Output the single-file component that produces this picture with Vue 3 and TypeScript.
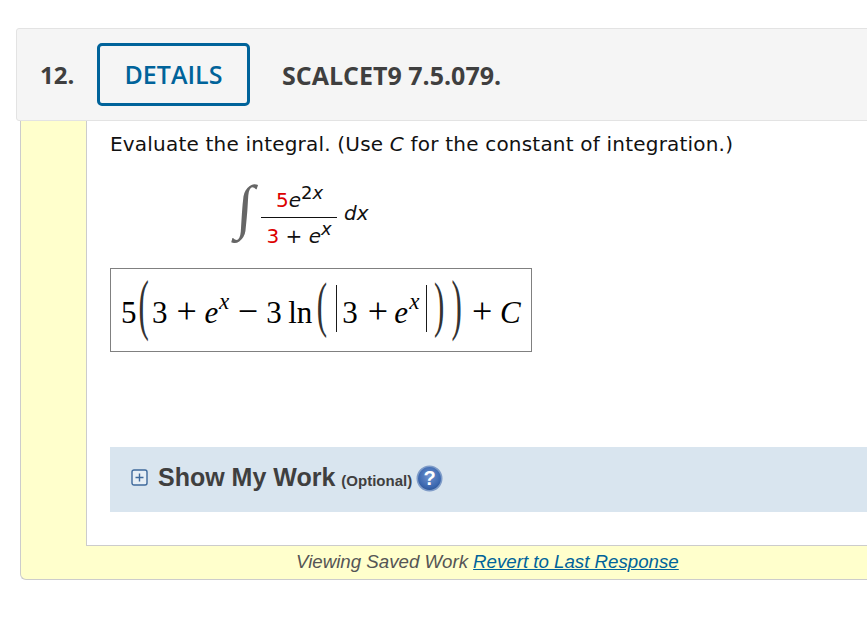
<template>
  <div class="page">
    <div class="question">
      <div class="head">
        <span class="num">12.</span>
        <button class="details">DETAILS</button>
        <span class="code">SCALCET9 7.5.079.</span>
      </div>
      <div class="shell">
        <div class="panel">
          <p class="prompt">Evaluate the integral. (Use <i>C</i> for the constant of integration.)</p>
          <div class="integral">
            <span class="int-sign">∫</span>
            <div class="frac">
              <div class="top"><span class="red">5</span><i>e</i><sup><span>2</span><i>x</i></sup></div>
              <div class="bottom"><span class="red">3</span> + <i>e</i><sup><i>x</i></sup></div>
            </div>
            <span class="dx"><i>dx</i></span>
          </div>
          <div class="answer">
            <span
              v-for="(t, i) in answer"
              :key="i"
              :class="t.kind"
              :style="{ marginLeft: t.gap + 'px' }"
            >{{ t.text }}</span>
          </div>
          <div class="work">
            <svg class="toggle" width="17" height="17" viewBox="0 0 17 17">
              <rect x="1" y="1" width="15" height="15" rx="2" fill="#e6eef5" stroke="#3f6a9c" stroke-width="1.4" />
              <path d="M4.5 8.5h8M8.5 4.5v8" stroke="#3f6a9c" stroke-width="1.4" fill="none" />
            </svg>
            <span class="work-title">Show My Work</span>
            <span class="optional">(Optional)</span>
            <svg class="help" width="27" height="27" viewBox="0 0 27 27">
              <defs>
                <radialGradient id="helpFill" cx="50%" cy="40%" r="60%">
                  <stop offset="0" stop-color="#6f93cf" />
                  <stop offset="0.75" stop-color="#3c68b0" />
                  <stop offset="1" stop-color="#2c5596" />
                </radialGradient>
              </defs>
              <circle cx="13.5" cy="13.5" r="12.2" fill="url(#helpFill)" stroke="#7f9cc8" stroke-width="1.6" />
              <text x="13.5" y="20" text-anchor="middle" class="help-mark">?</text>
            </svg>
          </div>
        </div>
        <div class="foot">
          <i>Viewing Saved Work</i> <a href="#" class="revert">Revert to Last Response</a>
        </div>
      </div>
    </div>
  </div>
</template>

<script setup lang="ts">
interface Token {
  text: string;
  kind: string;
  gap: number;
}

// the typeset answer, gap is the kerning in front of each token
const answer: Token[] = [
  { text: '5', kind: 'num-tok', gap: 0 },
  { text: '(', kind: 'paren big', gap: 2 },
  { text: '3', kind: 'num-tok', gap: 3.2 },
  { text: '+', kind: 'op', gap: 9 },
  { text: 'e', kind: 'var', gap: 7.7 },
  { text: 'x', kind: 'var exp', gap: 0.7 },
  { text: '−', kind: 'op', gap: 8.5 },
  { text: '3', kind: 'num-tok', gap: 8.2 },
  { text: 'ln', kind: 'num-tok', gap: 6.5 },
  { text: '(', kind: 'paren mid', gap: 4.5 },
  { text: '', kind: 'bar', gap: 9.2 },
  { text: '3', kind: 'num-tok', gap: 5 },
  { text: '+', kind: 'op', gap: 10 },
  { text: 'e', kind: 'var', gap: 6.2 },
  { text: 'x', kind: 'var exp', gap: 1.2 },
  { text: '', kind: 'bar', gap: 6 },
  { text: ')', kind: 'paren mid', gap: 7.5 },
  { text: ')', kind: 'paren big', gap: 7.2 },
  { text: '+', kind: 'op', gap: 10.2 },
  { text: 'C', kind: 'var', gap: 7.7 }
];
</script>

<style>
html, body {
  margin: 0;
  background: #fff;
  overflow: hidden;
}
</style>

<style scoped>
.page {
  width: 867px;
  height: 617px;
  padding-top: 28px;
  box-sizing: border-box;
  overflow: hidden;
}

.question {
  width: 900px;
  margin-left: 16px;
}

.head {
  height: 93px;
  box-sizing: border-box;
  display: flex;
  align-items: center;
  background: #f5f5f5;
  border: 1px solid #e3e3e3;
  border-radius: 3px;
  font-family: "Open Sans", sans-serif;
  color: #3f3f3f;
  padding-left: 23px;
}

.num {
  font-size: 24px;
  font-weight: 700;
  width: 57px;
}

.details {
  width: 153px;
  height: 63px;
  box-sizing: border-box;
  border: 3px solid #00639a;
  border-radius: 5px;
  background: transparent;
  color: #00639a;
  font-family: "Open Sans", sans-serif;
  font-size: 25px;
  font-weight: 600;
  padding: 0 0 2px;
}

.code {
  margin-left: 32px;
  font-size: 25px;
  font-weight: 700;
}

.shell {
  margin-left: 4px;
  background: #ffffcc;
  border-left: 1px solid #ccc;
  border-bottom: 1px solid #ccc;
  border-radius: 0 0 0 6px;
  padding-left: 65px;
}

.panel {
  height: 425px;
  box-sizing: border-box;
  background: #fff;
  border-left: 1px solid #ccc;
  border-bottom: 1px solid #ccc;
  padding: 10px 0 0 23px;
  font-family: "DejaVu Sans", sans-serif;
  color: #111;
}

.prompt {
  margin: 0;
  font-size: 20px;
  letter-spacing: 0.2px;
  line-height: 27px;
}

.integral {
  display: flex;
  align-items: center;
  height: 79px;
  margin-top: 15px;
  padding-left: 127px;
  font-size: 20px;
}

.int-sign {
  width: 24px;
  font-family: "Liberation Serif", serif;
  font-size: 60px;
  line-height: 60px;
  color: #666;
  margin-top: -12px;
  transform: skewX(-4deg);
}

.frac {
  text-align: center;
  width: 76px;
  margin-top: 8px;
}

.top {
  border-bottom: 1px solid #111;
  height: 36px;
  line-height: 38px;
  white-space: nowrap;
  padding-left: 1px;
  box-sizing: content-box;
}

.bottom {
  height: 34px;
  line-height: 36px;
  white-space: nowrap;
}

.frac sup {
  font-size: 18px;
  line-height: 0;
  vertical-align: 8px;
}

.red {
  color: #dd0000;
}

.dx {
  margin-left: 7px;
}

.answer {
  width: 422px;
  height: 84px;
  box-sizing: border-box;
  margin-top: 16px;
  border: 1px solid #808080;
  display: flex;
  align-items: baseline;
  padding: 27px 0 0 10px;
  font-family: "Liberation Serif", serif;
  font-size: 31px;
  line-height: 31px;
  color: #000;
}

.var {
  font-style: italic;
}

.exp {
  font-size: 23px;
  line-height: 23px;
  transform: translateY(-14px);
}

.paren {
  display: inline-block;
  color: #333;
}

.paren.big {
  transform: translateY(-9px) scale(1, 2.2);
}

.paren.mid {
  transform: translateY(-8px) scale(1, 1.96);
}

.op {
  font-size: 36px;
  line-height: 31px;
}

.bar {
  width: 1px;
  height: 47px;
  background: #1a1a1a;
  align-self: flex-start;
  margin-top: -11px;
}

.work {
  height: 65px;
  margin-top: 95px;
  background: #d9e5ef;
  display: flex;
  align-items: center;
  padding-left: 21px;
  font-family: "Liberation Sans", sans-serif;
  color: #3f3f3f;
}

.toggle {
  margin-top: -4px;
}

.work-title {
  font-size: 25px;
  font-weight: 700;
  margin: -5px 0 0 10px;
}

.optional {
  font-size: 15px;
  font-weight: 700;
  margin: 2px 0 0 6px;
}

.help {
  margin: -2px 0 0 4px;
}

.help-mark {
  font-family: "Liberation Sans", sans-serif;
  font-size: 20px;
  font-weight: 700;
  fill: #fff;
}

.foot {
  height: 33px;
  box-sizing: border-box;
  padding: 0 0 2px 210px;
  display: flex;
  align-items: center;
  gap: 5px;
  font-family: "Liberation Sans", sans-serif;
  font-size: 18.7px;
  color: #555;
}

.revert {
  color: #00639a;
  font-style: italic;
}
</style>
